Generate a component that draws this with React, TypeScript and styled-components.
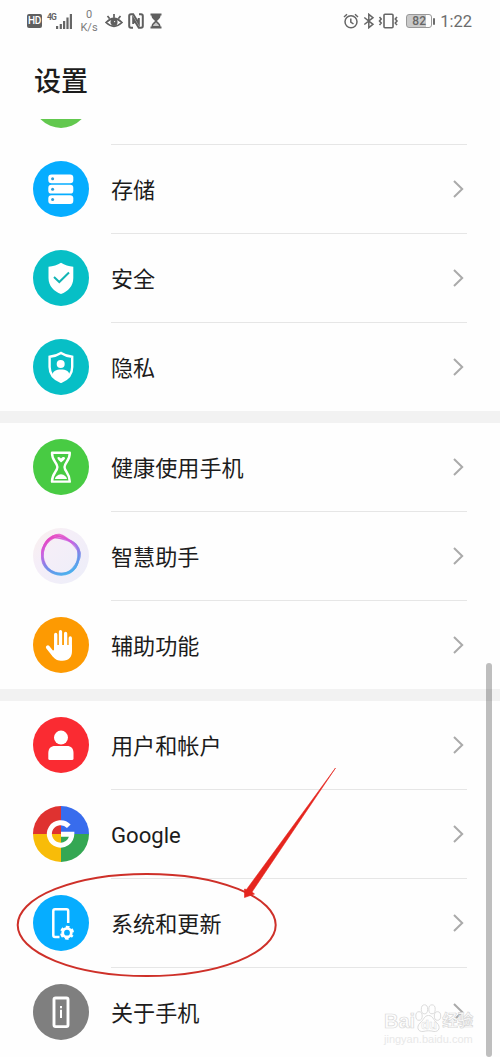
import React from 'react';
import styled, { createGlobalStyle } from 'styled-components';

const GlobalStyle = createGlobalStyle`
  body {
    margin: 0;
    background: #fefefe;
    font-family: Roboto, 'Noto Sans CJK SC', sans-serif;
    color: #1c1c1c;
  }
`;

const Screen = styled.div`
  position: relative;
  width: 500px;
  height: 1057px;
  overflow: hidden;
  background: #fefefe;
`;

const StatusBar = styled.header`
  display: flex;
  justify-content: space-between;
  height: 42px;
  padding: 0 28px 0 27px;
  box-sizing: border-box;
  color: #666;
`;

const StatusGroup = styled.div`
  display: flex;
  align-items: center;
`;

const Glyph = styled.svg<{ $gap?: number }>`
  display: block;
  flex: none;
  margin-left: ${(p) => p.$gap ?? 0}px;
`;

const HdBadge = styled.span`
  width: 15px;
  height: 14px;
  border-radius: 2px;
  background: #5f5f5f;
  color: #fff;
  font-size: 10px;
  font-weight: 500;
  line-height: 14.5px;
  letter-spacing: -0.3px;
  text-align: center;
`;

const Network = styled.div`
  display: flex;
  align-items: flex-end;
  width: 26px;
  height: 16px;
  margin-left: 5px;
`;

const NetworkType = styled.span`
  align-self: flex-start;
  width: 9px;
  font-size: 8.5px;
  font-weight: 700;
  line-height: 8px;
  letter-spacing: -0.9px;
`;

const Speed = styled.div`
  width: 18px;
  margin-left: 7px;
  font-size: 11px;
  line-height: 13px;
  text-align: center;
  color: #7b7b7b;
`;

const Battery = styled.span`
  display: flex;
  align-items: center;
  justify-content: center;
  width: 26px;
  height: 14px;
  margin-left: 7px;
  box-sizing: border-box;
  border: 1px solid #999;
  border-radius: 3px;
  background: linear-gradient(90deg, #cacaca 80%, #fefefe 80%);
  font-size: 12px;
  font-weight: 500;
  line-height: 12px;
  color: #666;
`;

const BatteryTip = styled.span`
  width: 2px;
  height: 7px;
  margin-left: 1px;
  border-radius: 1px;
  background: #6c6c6c;
`;

const Clock = styled.span`
  margin-left: 5px;
  font-size: 16.5px;
  color: #6c6c6c;
`;

const Title = styled.h1`
  height: 77px;
  margin: 0;
  padding: 2px 34px 0;
  box-sizing: border-box;
  font-size: 27px;
  font-weight: 500;
  line-height: 77px;
`;

const Peek = styled.div`
  display: flex;
  flex-direction: column;
  justify-content: flex-end;
  height: 26px;
  overflow: hidden;
`;

const Group = styled.section`
  & + & {
    border-top: 12px solid #f2f2f2;
  }
`;

const Row = styled.div<{ $last?: boolean }>`
  display: flex;
  flex: none;
  height: ${(p) => (p.$last ? 88 : 89)}px;
  padding: 0 33px;
`;

const IconSlot = styled.svg`
  display: block;
  flex: none;
  width: 56px;
  height: 56px;
  margin-top: 16px;
`;

const RowBody = styled.div<{ $last?: boolean }>`
  display: flex;
  flex: 1;
  align-items: center;
  justify-content: space-between;
  margin-left: 22px;
  padding-right: 3px;
  border-bottom: ${(p) => (p.$last ? 'none' : '1px solid #e6e6e6')};
`;

const Label = styled.span`
  font-size: 22.1px;
  line-height: 32px;
  padding-top: 2px;
`;

const ScrollThumb = styled.div`
  position: absolute;
  top: 663px;
  right: 8px;
  width: 6px;
  height: 394px;
  border-radius: 3px;
  background: rgba(0, 0, 0, 0.25);
`;

const Annotation = styled.svg`
  position: absolute;
  top: 760px;
  left: 0;
  pointer-events: none;
`;

const Watermark = styled.div`
  position: absolute;
  top: 1002px;
  left: 384px;
  width: 92px;
  color: #fefefe;
`;

const WatermarkBrand = styled.div`
  display: flex;
  align-items: flex-end;
  height: 31px;
  font-family: 'Liberation Sans', 'Noto Sans CJK SC', sans-serif;
  font-weight: 700;
  font-size: 20px;
  line-height: 24px;
  -webkit-text-stroke: 0.7px #d8d8d8;
`;

const WatermarkCn = styled.span`
  font-size: 15.5px;
  line-height: 24px;
`;

const WatermarkUrl = styled.div`
  font-family: 'Liberation Sans', sans-serif;
  font-size: 11px;
  line-height: 12px;
  color: #e8e8e8;
`;

const shield = 'M28 12.7 C31.5 15 36 16.3 40.3 16.8 V28 C40.3 36 35 41.5 28 44 C21 41.5 15.5 36 15.5 28 V16.8 C20 16.3 24.5 15 28 12.7Z';

const ringStrands = [
  { turn: -12, scale: 1.02 },
  { turn: -5, scale: 0.97 },
  { turn: 2, scale: 1.05 },
  { turn: 9, scale: 1 },
  { turn: 16, scale: 1.06 },
  { turn: 23, scale: 0.98 },
];

const icons: Record<string, React.ReactNode> = {
  green: <circle cx="28" cy="28" r="28" fill="#62c84e" />,
  storage: (
    <>
      <circle cx="28" cy="28" r="28" fill="#06adff" />
      {[13.4, 23.8, 34.2].map((y) => (
        <g key={y}>
          <rect x="15.3" y={y} width="25" height="8.8" rx="3.2" fill="#fff" />
          <circle cx="19.6" cy={y + 4.4} r="1.5" fill="#2d9ed8" />
        </g>
      ))}
    </>
  ),
  security: (
    <>
      <circle cx="28" cy="28" r="28" fill="#07bfc6" />
      <path d={shield} fill="#fff" />
      <path d="M21 27 L26.3 32 L36 22.5" fill="none" stroke="#12b5b5" strokeWidth="2" />
    </>
  ),
  privacy: (
    <>
      <circle cx="28" cy="28" r="28" fill="#07bfc6" />
      <path d="M28 14 C31.5 16.3 35.5 17.4 39.2 17.8 V28 C39.2 35.5 34.5 40.3 28 42.8 C21.5 40.3 16.6 35.5 16.6 28 V17.8 C20.5 17.4 24.5 16.3 28 14Z" fill="none" stroke="#fff" strokeWidth="2.4" />
      <circle cx="27.7" cy="25" r="4" fill="#fff" />
      <path d="M19.5 35.8 C20 32 23 30.5 28 30.5 S36 32 36.3 35.8 C34 39.3 31 41 28 42 C24.5 41 21.5 39 19.5 35.8Z" fill="#fff" />
    </>
  ),
  health: (
    <>
      <circle cx="28" cy="28" r="28" fill="#48cb43" />
      <path d="M19 13.7 H36.8 C37 22 31.5 23.5 31.5 28 S37 34.5 36.8 42.6 H19 C18.8 34.5 24.4 32.5 24.4 28 S18.8 22 19 13.7Z" fill="none" stroke="#fff" strokeWidth="2.4" strokeLinejoin="round" />
      <path d="M28 23.5 C26.5 22 24.6 20.8 24.3 18.8 C25.6 17.2 27.1 18.4 28 19.5 C29 18 31.2 17.2 32.2 19 C31.8 21 29.5 22 28 23.5Z M21.9 40 C22.3 37.6 24.5 35.7 28 35.2 C31.5 35.7 33.5 37.6 34 40Z" fill="#fff" />
    </>
  ),
  assistant: (
    <>
      <defs>
        <linearGradient id="halo" x1="0" y1="0" x2="1" y2="1">
          <stop offset="0" stopColor="#faf0ec" />
          <stop offset="0.35" stopColor="#f5eef8" />
          <stop offset="1" stopColor="#eceef9" />
        </linearGradient>
        <linearGradient id="ring" gradientUnits="userSpaceOnUse" x1="13" y1="11" x2="39" y2="46">
          <stop offset="0" stopColor="#ea3cba" />
          <stop offset="0.35" stopColor="#c95fe2" />
          <stop offset="0.65" stopColor="#7088e8" />
          <stop offset="1" stopColor="#40b4ee" />
        </linearGradient>
      </defs>
      <circle cx="28" cy="28" r="28" fill="url(#halo)" />
      {ringStrands.map(({ turn, scale }) => (
        <path
          key={turn}
          d="M16 12.5 C20 7.5 24 8 30 10 C36 12 40 13.5 43.5 17 C47.5 21 46.8 25 45.8 31 C44.8 37 43 41 38 43.5 C32 46.5 27 46.5 21 44 C15 41 12.5 38 11 31 C9.5 24 10.5 19.5 16 12.5Z"
          transform={`translate(27.6 27.4) rotate(${turn}) scale(${scale}) translate(-28.5 -27.3)`}
          fill="none"
          stroke="url(#ring)"
          strokeWidth="1.3"
          opacity="0.75"
        />
      ))}
    </>
  ),
  access: (
    <>
      <circle cx="28" cy="28" r="28" fill="#fd9a02" />
      <g stroke="#fff" strokeWidth="3.3" strokeLinecap="round" fill="none">
        <path d="M22.7 31 V17.5 M27.5 28 V14.7 M32.6 28 V16.5 M37.3 31 V21" />
        <path d="M14.8 30.2 L21 38" strokeWidth="3.8" />
      </g>
      <path d="M21 28 H39 V34 C39 40 36 43.7 29.5 43.7 C24.5 43.7 22 42.5 19.5 39 L17.5 35 L21 33Z" fill="#fff" />
    </>
  ),
  user: (
    <>
      <circle cx="28" cy="28" r="28" fill="#fa2b32" />
      <circle cx="28" cy="20.6" r="7" fill="#fff" />
      <path d="M15.3 41.5 V36 C15.3 31.5 18 29 22 29 H34 C38 29 40.5 31.5 40.5 36 V41.5 Q40.5 43 39 43 H16.8 Q15.3 43 15.3 41.5Z" fill="#fff" />
    </>
  ),
  google: (
    <>
      <path d="M28 28 V0 A28 28 0 0 0 0 28Z" fill="#df3230" />
      <path d="M28 28 H56 A28 28 0 0 0 28 0Z" fill="#386ced" />
      <path d="M28 28 H0 A28 28 0 0 0 28 56Z" fill="#f8bc08" />
      <path d="M28 28 V56 A28 28 0 0 0 56 28Z" fill="#34a753" />
      <path d="M35.8 20.3 A11.2 11.2 0 1 0 38.8 28.2 H28" fill="none" stroke="#fff" strokeWidth="5" />
    </>
  ),
  system: (
    <>
      <circle cx="28" cy="28" r="28" fill="#06adff" />
      <path d="M35.2 28 V16 Q35.2 14.2 33.5 14.2 H22 Q20.3 14.2 20.3 16 V40.3 Q20.3 42 22 42 H26.5" fill="none" stroke="#fff" strokeWidth="2.5" />
      <circle cx="34" cy="37.7" r="4.3" fill="none" stroke="#fff" strokeWidth="2.8" />
      <circle cx="34" cy="37.7" r="5.8" fill="none" stroke="#fff" strokeWidth="2.4" strokeDasharray="3.4 2.674" strokeDashoffset="1.7" transform="rotate(30 34 37.7)" />
    </>
  ),
  about: (
    <>
      <circle cx="28" cy="28" r="28" fill="#7f7f7f" />
      <rect x="21" y="14" width="14" height="28.6" rx="1.6" fill="none" stroke="#fff" strokeWidth="2.9" />
      <path d="M28 22 v2.2 M28 25.7 v8.4" stroke="#fff" strokeWidth="2" />
    </>
  ),
};

const groups = [
  [
    { icon: 'storage', label: '存储' },
    { icon: 'security', label: '安全' },
    { icon: 'privacy', label: '隐私' },
  ],
  [
    { icon: 'health', label: '健康使用手机' },
    { icon: 'assistant', label: '智慧助手' },
    { icon: 'access', label: '辅助功能' },
  ],
  [
    { icon: 'user', label: '用户和帐户' },
    { icon: 'google', label: 'Google' },
    { icon: 'system', label: '系统和更新' },
    { icon: 'about', label: '关于手机' },
  ],
];

function SettingsRow({ icon, label, last }: { icon: string; label: string; last?: boolean }) {
  return (
    <Row $last={last}>
      <IconSlot viewBox="0 0 56 56">{icons[icon]}</IconSlot>
      <RowBody $last={last}>
        <Label>{label}</Label>
        <Glyph width="12" height="20" viewBox="0 0 12 20" fill="none" stroke="#aaa" strokeWidth="2">
          <path d="M2 2 L10.2 10 L2 18" />
        </Glyph>
      </RowBody>
    </Row>
  );
}

export default function App() {
  return (
    <Screen>
      <GlobalStyle />
      <StatusBar>
        <StatusGroup>
          <HdBadge>HD</HdBadge>
          <Network>
            <NetworkType>4G</NetworkType>
            <Glyph width="17" height="16" viewBox="0 0 17 16" fill="#666">
              <path d="M0 13h2.2v3H0z M3.7 11h2.2v5H3.7z M7 8h2.2v8H7z M10.4 4.5h2.2V16h-2.2z M13.8 1H16v15h-2.2z" />
            </Glyph>
          </Network>
          <Speed>
            0<br />K/s
          </Speed>
          <Glyph $gap={7} width="18" height="16" viewBox="0 0 18 16" fill="none" stroke="#5f5f5f" strokeWidth="1.7">
            <path d="M1 9.5 Q9 1.5 17 9.5 Q9 17 1 9.5Z M9 4.5 V1 M4.5 5.5 L2.5 3 M13.5 5.5 L15.5 3" />
            <circle cx="9" cy="9.3" r="2.7" fill="#5f5f5f" />
            <circle cx="9.6" cy="8.6" r="0.6" fill="#fff" stroke="none" />
          </Glyph>
          <Glyph $gap={5} width="16" height="16" viewBox="0 0 16 16" fill="none" stroke="#5f5f5f" strokeWidth="2">
            <path d="M5 14.8 H3 Q1.2 14.8 1.2 13 V3 Q1.2 1.2 3 1.2 H5.2 L10.8 10.5 V5 M11 1.2 H13 Q14.8 1.2 14.8 3 V13 Q14.8 14.8 13 14.8 H10.8 L5.2 5.5 V11" />
          </Glyph>
          <Glyph $gap={6} width="12" height="16" viewBox="0 0 12 16" fill="#5f5f5f">
            <path d="M.5 .5 H11.5 V2.5 H10.5 C10.5 5.5 8 6.5 7 8 C8 9.5 10.5 10.5 10.5 13.5 H11.5 V15.5 H.5 V13.5 H1.5 C1.5 10.5 4 9.5 5 8 C4 6.5 1.5 5.5 1.5 2.5 H.5Z" />
            <path d="M3 13 C3.3 11.3 5 10.7 6 9.3 C7 10.7 8.7 11.3 9 13Z" fill="#c9c9c9" />
          </Glyph>
        </StatusGroup>
        <StatusGroup>
          <Glyph width="16" height="16" viewBox="0 0 16 16" fill="none" stroke="#666" strokeWidth="1.5">
            <circle cx="8" cy="8.8" r="6" />
            <path d="M7.8 5.5 V9 L10.5 11 M1 4 L4 1.3 M15 4 L12 1.3" />
          </Glyph>
          <Glyph $gap={4} width="12" height="16" viewBox="0 0 12 16" fill="none" stroke="#666" strokeWidth="1.5">
            <path d="M1.3 4.5 L10 11.3 L5.8 14.7 V1.3 L10 4.7 L1.3 11.5" />
          </Glyph>
          <Glyph $gap={3} width="21" height="16" viewBox="0 0 21 16" fill="none" stroke="#666" strokeWidth="1.6">
            <rect x="6" y="1.3" width="9" height="13.4" rx="1" />
            <path d="M1.5 4 l1.7 2 -1.7 2 1.7 2 -1.7 2 M19 4 l-1.7 2 1.7 2 -1.7 2 1.7 2" />
          </Glyph>
          <Battery>82</Battery>
          <BatteryTip />
          <Clock>1:22</Clock>
        </StatusGroup>
      </StatusBar>
      <Title>设置</Title>
      <main>
        <Peek>
          <SettingsRow icon="green" label="" />
        </Peek>
        {groups.map((rows, g) => (
          <Group key={g}>
            {rows.map((r, i) => (
              <SettingsRow key={r.icon} icon={r.icon} label={r.label} last={i === rows.length - 1} />
            ))}
          </Group>
        ))}
      </main>
      <ScrollThumb />
      <Watermark>
        <WatermarkBrand>
          Bai
          <Glyph width="27" height="29" viewBox="0 0 27 29" fill="#fefefe" stroke="#dcdcdc" strokeWidth="1">
            <ellipse cx="4" cy="12" rx="3.2" ry="4.3" />
            <ellipse cx="9.5" cy="5.3" rx="3.2" ry="4.5" />
            <ellipse cx="17" cy="5.3" rx="3.2" ry="4.5" />
            <ellipse cx="22.5" cy="12" rx="3.2" ry="4.3" />
            <path d="M13.5 11.5 C18 11.5 18 16 22 19 C26 23 24 28 19 27.5 C15 26.5 12 26.5 8 27.5 C3 28 1 23 5 19 C9 16 9 11.5 13.5 11.5Z" />
            <text x="6" y="25" fontSize="13" strokeWidth="0.5">du</text>
          </Glyph>
          <WatermarkCn>经验</WatermarkCn>
        </WatermarkBrand>
        <WatermarkUrl>jingyan.baidu.com</WatermarkUrl>
      </Watermark>
      <Annotation width="350" height="225" viewBox="0 760 350 225">
        <ellipse cx="146.7" cy="925" rx="129" ry="51" fill="none" stroke="#ce3029" strokeWidth="2" />
        <path d="M335.5 768 L252 892 L254.5 894 L244.5 897.5 L244.5 889 L246.5 889.5Z" fill="#e5251e" stroke="#e5251e" strokeWidth="0.6" />
      </Annotation>
    </Screen>
  );
}
